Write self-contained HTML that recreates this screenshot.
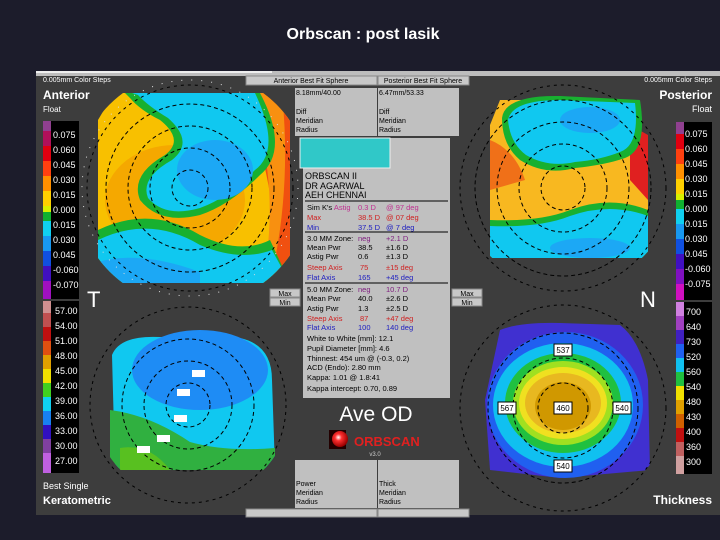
<!DOCTYPE html>
<html><head><meta charset="utf-8"><style>
html,body{margin:0;padding:0;background:#1c1c2b;width:720px;height:540px;overflow:hidden}
svg{display:block}
text{font-family:"Liberation Sans",sans-serif}
</style></head><body>
<svg width="720" height="540" viewBox="0 0 720 540" xmlns="http://www.w3.org/2000/svg">
<defs>
<clipPath id="c1"><circle cx="193" cy="188" r="118"/></clipPath>
<clipPath id="c2"><circle cx="567" cy="180" r="108"/></clipPath>
<clipPath id="c3"><circle cx="192" cy="400" r="100"/></clipPath>
<clipPath id="c4"><circle cx="566" cy="400" r="106"/></clipPath>
<radialGradient id="ob" cx="0.4" cy="0.4" r="0.6"><stop offset="0" stop-color="#fff"/><stop offset="0.35" stop-color="#ff3030"/><stop offset="1" stop-color="#900"/></radialGradient>
</defs>
<rect width="720" height="540" fill="#1c1c2b"/>
<text x="363" y="39" fill="#fff" font-size="16" font-weight="bold" text-anchor="middle">Orbscan : post lasik</text>
<rect x="36" y="71" width="684" height="444" fill="#3d3d3d"/>
<rect x="36" y="71" width="684" height="5" fill="#bdbdbd"/>
<rect x="36" y="71" width="236" height="2" fill="#eee"/>

<!-- anterior map -->
<g clip-path="url(#c1)">
<path d="M114 93 L290 93 L290 283 L110 283 L98 260 L98 120Z" fill="#f8c000"/>
<path d="M240 93 L290 93 L290 283 L270 283 Q285 200 240 93Z" fill="#f05010"/>
<path d="M250 93 L282 93 Q292 190 270 283 L262 283 Q282 190 250 93Z" fill="#f89010"/>
<ellipse cx="175" cy="200" rx="70" ry="55" fill="#f5a800"/>
<path d="M125 93 L260 93 Q290 150 260 175 Q230 205 200 215 Q160 225 140 200 Q130 175 165 155 Q185 140 160 120 Q140 110 130 98Z" fill="#18b030"/>
<path d="M132 93 L255 93 Q282 150 255 170 Q228 198 200 208 Q165 218 148 198 Q140 178 172 160 Q195 142 168 118 Q148 106 138 95Z" fill="#10c8f0"/>
<ellipse cx="215" cy="170" rx="38" ry="30" fill="#1ca8f5"/>
<path d="M98 230 Q150 205 200 235 Q240 255 270 240 L290 283 L98 283Z" fill="#18b030"/>
<path d="M98 240 Q150 215 200 245 Q240 262 272 250 L290 283 L98 283Z" fill="#10c8f0"/>
<path d="M98 262 Q140 250 200 272 L200 283 L98 283Z" fill="#1ca8f5"/>
</g>
<g fill="none" stroke="#000" stroke-dasharray="4 3" stroke-width="1">
<circle cx="190" cy="188" r="18"/><circle cx="190" cy="188" r="40"/><circle cx="190" cy="188" r="62"/><circle cx="190" cy="188" r="84"/>
</g>
<circle cx="190" cy="188" r="103" fill="none" stroke="#000" stroke-dasharray="3 4"/>
<circle cx="190" cy="188" r="108" fill="none" stroke="#ddd" stroke-dasharray="1 9"/>

<!-- posterior map -->
<g clip-path="url(#c2)">
<path d="M500 100 L605 100 L605 118 L625 118 L645 135 L648 200 L648 258 L490 258 L490 125Z" fill="#f8b820"/>
<path d="M490 140 Q515 150 525 180 L490 190Z" fill="#f07018"/>
<path d="M630 125 L648 135 L648 200 L630 180Z" fill="#e02020"/>
<path d="M502 118 Q505 95 560 96 L640 100 Q648 150 625 158 Q605 165 575 168 Q545 176 520 160 Q502 145 502 118Z" fill="#18b030"/>
<path d="M508 120 Q512 100 560 100 L635 103 Q640 145 620 152 Q600 160 575 162 Q548 168 526 155 Q510 143 508 120Z" fill="#10c8f0"/>
<ellipse cx="590" cy="120" rx="30" ry="13" fill="#1ca8f5"/>
<path d="M490 220 Q540 222 570 210 Q610 195 648 210 L648 258 L490 258Z" fill="#18b030"/>
<path d="M490 226 Q540 228 570 216 Q610 202 648 216 L648 258 L490 258Z" fill="#10c8f0"/>
<ellipse cx="590" cy="248" rx="40" ry="10" fill="#1ca8f5"/>
</g>
<g fill="none" stroke="#000" stroke-dasharray="4 3">
<circle cx="563" cy="188" r="22"/><circle cx="563" cy="188" r="44"/><circle cx="563" cy="188" r="66"/><circle cx="563" cy="188" r="88"/>
</g>
<circle cx="563" cy="188" r="103" fill="none" stroke="#000" stroke-dasharray="3 4"/>

<!-- keratometric map -->
<g clip-path="url(#c3)">
<path d="M112 355 Q120 335 160 337 L240 338 Q272 345 272 380 L275 468 L115 468Z" fill="#10c8f0"/>
<ellipse cx="200" cy="370" rx="68" ry="40" fill="#1e8cf5"/>
<path d="M110 410 Q150 415 190 442 Q225 452 275 448 L275 470 L110 470Z" fill="#30b040"/>
<path d="M120 448 Q150 443 170 470 L120 470Z" fill="#58c020"/>
</g>
<g fill="none" stroke="#000" stroke-dasharray="4 3">
<circle cx="188" cy="405" r="22"/><circle cx="188" cy="405" r="44"/><circle cx="188" cy="405" r="66"/>
</g>
<circle cx="188" cy="405" r="98" fill="none" stroke="#000" stroke-dasharray="3 4"/>
<g fill="#fff"><rect x="192" y="370" width="13" height="7"/><rect x="177" y="389" width="13" height="7"/><rect x="174" y="415" width="13" height="7"/><rect x="157" y="435" width="13" height="7"/><rect x="137" y="446" width="13" height="7"/></g>

<!-- thickness map -->
<g clip-path="url(#c4)">
<path d="M500 330 Q520 322 560 323 L620 325 Q640 340 648 380 L650 470 L560 478 L490 470 L485 400Z" fill="#4030d0"/>
<ellipse cx="565" cy="405" rx="78" ry="73" fill="#2060f0"/>
<ellipse cx="563" cy="405" rx="70" ry="62" fill="#10c0f0"/>
<ellipse cx="563" cy="403" rx="58" ry="50" fill="#20c040"/>
<ellipse cx="563" cy="403" rx="50" ry="42" fill="#a0e020"/>
<ellipse cx="563" cy="403" rx="44" ry="36" fill="#f0e020"/>
<ellipse cx="563" cy="403" rx="38" ry="30" fill="#e8b820"/>
<ellipse cx="563" cy="406" rx="28" ry="24" fill="#d09800"/>
</g>
<g fill="none" stroke="#000" stroke-dasharray="4 3">
<circle cx="563" cy="408" r="25"/><circle cx="563" cy="408" r="50"/><circle cx="563" cy="408" r="75"/>
</g>
<circle cx="563" cy="408" r="103" fill="none" stroke="#000" stroke-dasharray="3 4"/>
<g fill="#fff" stroke="#000"><rect x="554" y="344" width="18" height="12"/><rect x="554" y="402" width="18" height="12"/><rect x="498" y="402" width="18" height="12"/><rect x="613" y="402" width="18" height="12"/><rect x="554" y="460" width="18" height="12"/></g>
<g font-size="8" fill="#000" text-anchor="middle"><text x="563" y="353">537</text><text x="563" y="411">460</text><text x="507" y="411">567</text><text x="622" y="411">540</text><text x="563" y="469">540</text></g>

<!-- left colorbars -->
<rect x="43" y="121" width="36" height="178" fill="#000"/>
<g>
<rect x="43" y="121" width="8" height="10" fill="#904090"/><rect x="43" y="131" width="8" height="15" fill="#b0105a"/><rect x="43" y="146" width="8" height="15" fill="#e00010"/><rect x="43" y="161" width="8" height="15" fill="#ff4010"/><rect x="43" y="176" width="8" height="15" fill="#ff9000"/><rect x="43" y="191" width="8" height="15" fill="#ffd000"/><rect x="43" y="206" width="8" height="6" fill="#d8f000"/><rect x="43" y="212" width="8" height="9" fill="#10b030"/><rect x="43" y="221" width="8" height="15" fill="#10d0f0"/><rect x="43" y="236" width="8" height="15" fill="#1898f0"/><rect x="43" y="251" width="8" height="15" fill="#1050e0"/><rect x="43" y="266" width="8" height="15" fill="#4010c0"/><rect x="43" y="281" width="8" height="18" fill="#a010c0"/>
</g>
<g font-size="9" fill="#fff"><text x="53" y="138">0.075</text><text x="53" y="153">0.060</text><text x="53" y="168">0.045</text><text x="53" y="183">0.030</text><text x="53" y="198">0.015</text><text x="53" y="213">0.000</text><text x="53" y="228">0.015</text><text x="53" y="243">0.030</text><text x="53" y="258">0.045</text><text x="53" y="273">-0.060</text><text x="53" y="288">-0.070</text></g>
<rect x="43" y="301" width="36" height="172" fill="#000"/>
<g>
<rect x="43" y="301" width="8" height="12" fill="#d09090"/><rect x="43" y="313" width="8" height="14" fill="#c05050"/><rect x="43" y="327" width="8" height="14" fill="#c01010"/><rect x="43" y="341" width="8" height="14" fill="#e05010"/><rect x="43" y="355" width="8" height="14" fill="#e0a000"/><rect x="43" y="369" width="8" height="14" fill="#f0e000"/><rect x="43" y="383" width="8" height="14" fill="#40d020"/><rect x="43" y="397" width="8" height="14" fill="#10d0f0"/><rect x="43" y="411" width="8" height="14" fill="#1880f0"/><rect x="43" y="425" width="8" height="14" fill="#3010c0"/><rect x="43" y="439" width="8" height="14" fill="#8040a0"/><rect x="43" y="453" width="8" height="20" fill="#c060e0"/>
</g>
<g font-size="9" fill="#fff"><text x="55" y="314">57.00</text><text x="55" y="329">54.00</text><text x="55" y="344">51.00</text><text x="55" y="359">48.00</text><text x="55" y="374">45.00</text><text x="55" y="389">42.00</text><text x="55" y="404">39.00</text><text x="55" y="419">36.00</text><text x="55" y="434">33.00</text><text x="55" y="449">30.00</text><text x="55" y="464">27.00</text></g>

<!-- right colorbars -->
<rect x="676" y="122" width="36" height="178" fill="#000"/>
<g>
<rect x="676" y="122" width="8" height="12" fill="#904090"/><rect x="676" y="134" width="8" height="15" fill="#e00010"/><rect x="676" y="149" width="8" height="15" fill="#ff4010"/><rect x="676" y="164" width="8" height="15" fill="#ff9000"/><rect x="676" y="179" width="8" height="15" fill="#ffd000"/><rect x="676" y="194" width="8" height="6" fill="#d8f000"/><rect x="676" y="200" width="8" height="9" fill="#10b030"/><rect x="676" y="209" width="8" height="15" fill="#10d0f0"/><rect x="676" y="224" width="8" height="15" fill="#1898f0"/><rect x="676" y="239" width="8" height="15" fill="#1050e0"/><rect x="676" y="254" width="8" height="15" fill="#4010c0"/><rect x="676" y="269" width="8" height="15" fill="#8010c0"/><rect x="676" y="284" width="8" height="16" fill="#d010c0"/>
</g>
<g font-size="9" fill="#fff"><text x="685" y="137">0.075</text><text x="685" y="152">0.060</text><text x="685" y="167">0.045</text><text x="685" y="182">0.030</text><text x="685" y="197">0.015</text><text x="685" y="212">0.000</text><text x="685" y="227">0.015</text><text x="685" y="242">0.030</text><text x="685" y="257">0.045</text><text x="685" y="272">-0.060</text><text x="685" y="287">-0.075</text></g>
<rect x="676" y="302" width="36" height="172" fill="#000"/>
<g>
<rect x="676" y="302" width="8" height="14" fill="#d080e0"/><rect x="676" y="316" width="8" height="14" fill="#a040c0"/><rect x="676" y="330" width="8" height="14" fill="#4020c0"/><rect x="676" y="344" width="8" height="14" fill="#2060f0"/><rect x="676" y="358" width="8" height="14" fill="#10c0f0"/><rect x="676" y="372" width="8" height="14" fill="#20c040"/><rect x="676" y="386" width="8" height="14" fill="#f0e000"/><rect x="676" y="400" width="8" height="14" fill="#e0a000"/><rect x="676" y="414" width="8" height="14" fill="#d06000"/><rect x="676" y="428" width="8" height="14" fill="#c01010"/><rect x="676" y="442" width="8" height="14" fill="#c06060"/><rect x="676" y="456" width="8" height="18" fill="#d0a0a0"/>
</g>
<g font-size="9" fill="#fff"><text x="686" y="315">700</text><text x="686" y="330">640</text><text x="686" y="345">730</text><text x="686" y="360">520</text><text x="686" y="375">560</text><text x="686" y="390">540</text><text x="686" y="405">480</text><text x="686" y="420">430</text><text x="686" y="435">400</text><text x="686" y="450">360</text><text x="686" y="465">300</text></g>

<!-- labels -->
<g fill="#fff">
<text x="43" y="82" font-size="7">0.005mm Color Steps</text>
<text x="43" y="99" font-size="12" font-weight="bold">Anterior</text>
<text x="43" y="112" font-size="8">Float</text>
<text x="712" y="82" font-size="7" text-anchor="end">0.005mm Color Steps</text>
<text x="712" y="99" font-size="12" font-weight="bold" text-anchor="end">Posterior</text>
<text x="712" y="112" font-size="9" text-anchor="end">Float</text>
<text x="43" y="489" font-size="9">Best Single</text>
<text x="43" y="504" font-size="11" font-weight="bold">Keratometric</text>
<text x="712" y="504" font-size="12" font-weight="bold" text-anchor="end">Thickness</text>
<text x="87" y="307" font-size="22">T</text>
<text x="640" y="307" font-size="22">N</text>
</g>

<g fill="#c8c8c8" stroke="#888"><rect x="246" y="76" width="131" height="9"/><rect x="378" y="76" width="91" height="9"/>
<rect x="270" y="289" width="30" height="8"/><rect x="270" y="298" width="30" height="8"/><rect x="452" y="289" width="30" height="8"/><rect x="452" y="298" width="30" height="8"/>
<rect x="246" y="509" width="131" height="8"/><rect x="378" y="509" width="91" height="8"/></g>
<g font-size="7" fill="#000" text-anchor="middle"><text x="311" y="83">Anterior Best Fit Sphere</text><text x="423" y="83">Posterior Best Fit Sphere</text>
<text x="285" y="296">Max</text><text x="285" y="305">Min</text><text x="467" y="296">Max</text><text x="467" y="305">Min</text></g>

<rect x="295" y="88" width="82" height="48" fill="#c0c0c0"/><rect x="378" y="88" width="81" height="48" fill="#c0c0c0"/>
<g font-size="7" fill="#000"><text x="296" y="95">8.18mm/40.00</text><text x="296" y="114">Diff</text><text x="296" y="123">Meridian</text><text x="296" y="132">Radius</text>
<text x="379" y="95">6.47mm/53.33</text><text x="379" y="114">Diff</text><text x="379" y="123">Meridian</text><text x="379" y="132">Radius</text></g>
<rect x="303" y="138" width="147" height="260" fill="#c0c0c0"/>
<rect x="300" y="138" width="90" height="30" fill="#30c8c8" stroke="#eee"/>
<g font-size="9" fill="#000"><text x="305" y="179">ORBSCAN II</text><text x="305" y="189">DR AGARWAL</text><text x="305" y="198">AEH CHENNAI</text></g>
<g stroke="#000"><line x1="305" y1="201" x2="448" y2="201"/><line x1="305" y1="232" x2="448" y2="232"/><line x1="305" y1="283" x2="448" y2="283"/></g>
<g font-size="7.5">
<text x="307" y="210" fill="#000">Sim K's <tspan fill="#c03090">Astig</tspan></text><text x="358" y="210" fill="#c03090">0.3 D</text><text x="386" y="210" fill="#c03090">@ 97 deg</text>
<text x="307" y="220" fill="#d02020">Max</text><text x="358" y="220" fill="#d02020">38.5 D</text><text x="386" y="220" fill="#d02020">@ 07 deg</text>
<text x="307" y="230" fill="#2020c0">Min</text><text x="358" y="230" fill="#2020c0">37.5 D</text><text x="386" y="230" fill="#2020c0">@ 7 deg</text>
<text x="307" y="241" fill="#000">3.0 MM Zone:</text><text x="358" y="241" fill="#802080">neg</text><text x="386" y="241" fill="#802080">+2.1 D</text>
<text x="307" y="250" fill="#000">Mean Pwr</text><text x="358" y="250" fill="#000">38.5</text><text x="386" y="250" fill="#000">±1.6 D</text>
<text x="307" y="259" fill="#000">Astig Pwr</text><text x="358" y="259" fill="#000">0.6</text><text x="386" y="259" fill="#000">±1.3 D</text>
<text x="307" y="270" fill="#d02020">Steep Axis</text><text x="360" y="270" fill="#d02020">75</text><text x="386" y="270" fill="#d02020">±15 deg</text>
<text x="307" y="280" fill="#2020c0">Flat Axis</text><text x="358" y="280" fill="#2020c0">165</text><text x="386" y="280" fill="#2020c0">+45 deg</text>
<text x="307" y="292" fill="#000">5.0 MM Zone:</text><text x="358" y="292" fill="#802080">neg</text><text x="386" y="292" fill="#802080">10.7 D</text>
<text x="307" y="301" fill="#000">Mean Pwr</text><text x="358" y="301" fill="#000">40.0</text><text x="386" y="301" fill="#000">±2.6 D</text>
<text x="307" y="311" fill="#000">Astig Pwr</text><text x="358" y="311" fill="#000">1.3</text><text x="386" y="311" fill="#000">±2.5 D</text>
<text x="307" y="321" fill="#d02020">Steep Axis</text><text x="360" y="321" fill="#d02020">87</text><text x="386" y="321" fill="#d02020">+47 deg</text>
<text x="307" y="330" fill="#2020c0">Flat Axis</text><text x="358" y="330" fill="#2020c0">100</text><text x="386" y="330" fill="#2020c0">140 deg</text>
<g fill="#000"><text x="307" y="341">White to White [mm]: 12.1</text><text x="307" y="351">Pupil Diameter [mm]: 4.6</text><text x="307" y="361">Thinnest: 454 um @ (-0.3, 0.2)</text><text x="307" y="370">ACD (Endo): 2.80 mm</text><text x="307" y="380">Kappa: 1.01 @ 1.8:41</text><text x="307" y="391">Kappa intercept: 0.70, 0.89</text></g>
</g>
<text x="376" y="421" font-size="21" fill="#fff" text-anchor="middle">Ave OD</text>
<rect x="329" y="430" width="17" height="19" fill="#200"/>
<circle cx="340" cy="439" r="8" fill="url(#ob)"/>
<text x="354" y="446" font-size="13" font-weight="bold" fill="#e02020">ORBSCAN</text>
<text x="375" y="456" font-size="6" fill="#ccc" text-anchor="middle">v3.0</text>
<rect x="295" y="460" width="82" height="48" fill="#c0c0c0"/><rect x="378" y="460" width="81" height="48" fill="#c0c0c0"/>
<g font-size="7" fill="#000"><text x="296" y="486">Power</text><text x="296" y="495">Meridian</text><text x="296" y="504">Radius</text>
<text x="379" y="486">Thick</text><text x="379" y="495">Meridian</text><text x="379" y="504">Radius</text></g>
</svg>
</body></html>
